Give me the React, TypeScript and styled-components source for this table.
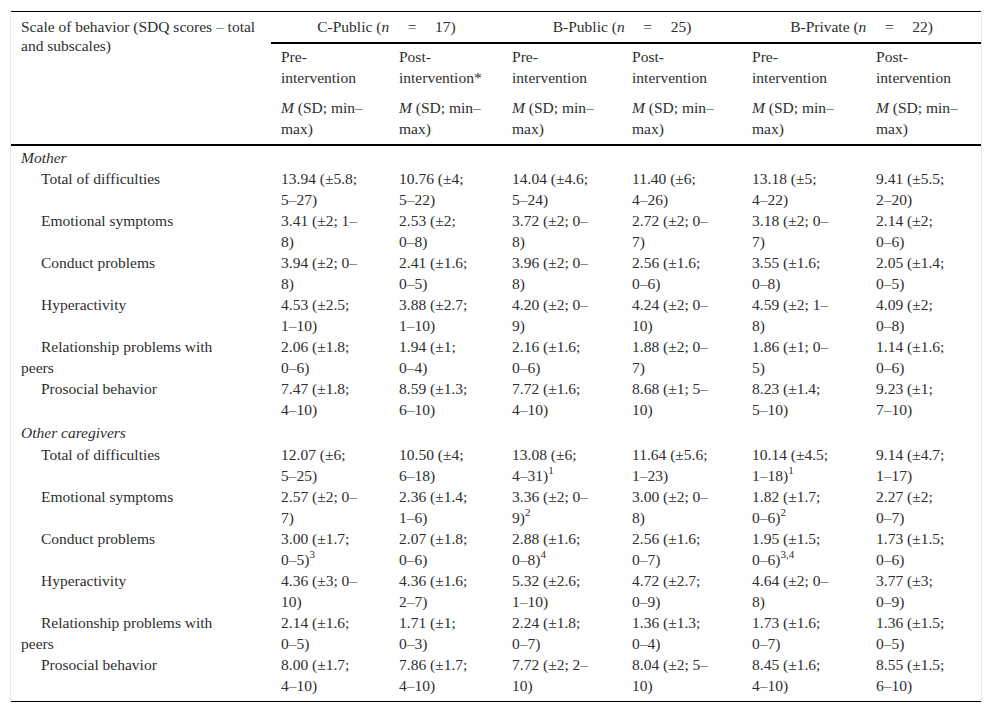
import React from "react";
import styled, { createGlobalStyle } from "styled-components";

const GlobalStyle = createGlobalStyle`
  html, body {
    margin: 0;
    padding: 0;
    background: #fff;
  }
  body {
    font-family: "Liberation Serif", "Times New Roman", serif;
    color: #2e2e2e;
  }
`;

type Section = {
  title: string;
  rows: { label: string; cells: string[] }[];
};

// cell format: "first line|second line^superscript"
const sections: Section[] = [
  {
    title: "Mother",
    rows: [
      {
        label: "Total of difficulties",
        cells: ["13.94 (±5.8;|5–27)", "10.76 (±4;|5–22)", "14.04 (±4.6;|5–24)", "11.40 (±6;|4–26)", "13.18 (±5;|4–22)", "9.41 (±5.5;|2–20)"],
      },
      {
        label: "Emotional symptoms",
        cells: ["3.41 (±2; 1–|8)", "2.53 (±2;|0–8)", "3.72 (±2; 0–|8)", "2.72 (±2; 0–|7)", "3.18 (±2; 0–|7)", "2.14 (±2;|0–6)"],
      },
      {
        label: "Conduct problems",
        cells: ["3.94 (±2; 0–|8)", "2.41 (±1.6;|0–5)", "3.96 (±2; 0–|8)", "2.56 (±1.6;|0–6)", "3.55 (±1.6;|0–8)", "2.05 (±1.4;|0–5)"],
      },
      {
        label: "Hyperactivity",
        cells: ["4.53 (±2.5;|1–10)", "3.88 (±2.7;|1–10)", "4.20 (±2; 0–|9)", "4.24 (±2; 0–|10)", "4.59 (±2; 1–|8)", "4.09 (±2;|0–8)"],
      },
      {
        label: "Relationship problems with|peers",
        cells: ["2.06 (±1.8;|0–6)", "1.94 (±1;|0–4)", "2.16 (±1.6;|0–6)", "1.88 (±2; 0–|7)", "1.86 (±1; 0–|5)", "1.14 (±1.6;|0–6)"],
      },
      {
        label: "Prosocial behavior",
        cells: ["7.47 (±1.8;|4–10)", "8.59 (±1.3;|6–10)", "7.72 (±1.6;|4–10)", "8.68 (±1; 5–|10)", "8.23 (±1.4;|5–10)", "9.23 (±1;|7–10)"],
      },
    ],
  },
  {
    title: "Other caregivers",
    rows: [
      {
        label: "Total of difficulties",
        cells: ["12.07 (±6;|5–25)", "10.50 (±4;|6–18)", "13.08 (±6;|4–31)^1", "11.64 (±5.6;|1–23)", "10.14 (±4.5;|1–18)^1", "9.14 (±4.7;|1–17)"],
      },
      {
        label: "Emotional symptoms",
        cells: ["2.57 (±2; 0–|7)", "2.36 (±1.4;|1–6)", "3.36 (±2; 0–|9)^2", "3.00 (±2; 0–|8)", "1.82 (±1.7;|0–6)^2", "2.27 (±2;|0–7)"],
      },
      {
        label: "Conduct problems",
        cells: ["3.00 (±1.7;|0–5)^3", "2.07 (±1.8;|0–6)", "2.88 (±1.6;|0–8)^4", "2.56 (±1.6;|0–7)", "1.95 (±1.5;|0–6)^3,4", "1.73 (±1.5;|0–6)"],
      },
      {
        label: "Hyperactivity",
        cells: ["4.36 (±3; 0–|10)", "4.36 (±1.6;|2–7)", "5.32 (±2.6;|1–10)", "4.72 (±2.7;|0–9)", "4.64 (±2; 0–|8)", "3.77 (±3;|0–9)"],
      },
      {
        label: "Relationship problems with|peers",
        cells: ["2.14 (±1.6;|0–5)", "1.71 (±1;|0–3)", "2.24 (±1.8;|0–7)", "1.36 (±1.3;|0–4)", "1.73 (±1.6;|0–7)", "1.36 (±1.5;|0–5)"],
      },
      {
        label: "Prosocial behavior",
        cells: ["8.00 (±1.7;|4–10)", "7.86 (±1.7;|4–10)", "7.72 (±2; 2–|10)", "8.04 (±2; 5–|10)", "8.45 (±1.6;|4–10)", "8.55 (±1.5;|6–10)"],
      },
    ],
  },
];

const groups = [
  { name: "C-Public", n: 17 },
  { name: "B-Public", n: 25 },
  { name: "B-Private", n: 22 },
];

const colWidths = [260, 118, 113, 120, 120, 124, 115];

function Lines({ text }: { text: string }) {
  const [body, sup] = text.split("^");
  const [first, second] = body.split("|");
  return (
    <>
      {first}
      {second !== undefined && <br />}
      {second}
      {sup && <sup>{sup}</sup>}
    </>
  );
}

export default function App() {
  return (
    <>
      <GlobalStyle />
      <Frame>
        <Table>
          <colgroup>
            {colWidths.map((w, i) => (
              <col key={i} style={{ width: w }} />
            ))}
          </colgroup>
          <thead>
            <tr>
              <ScaleHead rowSpan={2}>
                Scale of behavior (SDQ scores – total
                <br />
                and subscales)
              </ScaleHead>
              {groups.map((g) => (
                <GroupHead key={g.name} colSpan={2}>
                  {g.name} (<i>n</i>
                  {"\u2003\u2009=\u2003\u2009"}
                  {g.n})
                </GroupHead>
              ))}
            </tr>
            <tr>
              {groups.map((g, gi) =>
                ["Pre-", "Post-"].map((p, pi) => (
                  <SubHead key={`${g.name}-${p}`}>
                    <HeadBlock>
                      {p}
                      <br />
                      intervention{gi === 0 && pi === 1 ? "*" : ""}
                    </HeadBlock>
                    <HeadBlock>
                      <i>M</i> (SD; min–
                      <br />
                      max)
                    </HeadBlock>
                  </SubHead>
                ))
              )}
            </tr>
          </thead>
          {sections.map((s, si) => (
            <tbody key={s.title}>
              <tr>
                <SectionCell colSpan={7} $first={si === 0}>
                  <i>{s.title}</i>
                </SectionCell>
              </tr>
              {s.rows.map((r, ri) => {
                const last = si === sections.length - 1 && ri === s.rows.length - 1;
                return (
                  <tr key={r.label}>
                    <LabelCell $last={last}>
                      <Lines text={r.label} />
                    </LabelCell>
                    {r.cells.map((c, ci) => (
                      <DataCell key={ci} $last={last}>
                        <Lines text={c} />
                      </DataCell>
                    ))}
                  </tr>
                );
              })}
            </tbody>
          ))}
        </Table>
      </Frame>
    </>
  );
}

const Frame = styled.div`
  margin: 11px 0 0 10px;
  width: 970px;
  border-left: 1px solid #e6e6e6;
  border-right: 1px solid #e6e6e6;
`;

const Table = styled.table`
  width: 970px;
  table-layout: fixed;
  border-collapse: collapse;
  font-family: "Liberation Serif", "Times New Roman", serif;
  font-size: 15.5px;
  line-height: 21px;
  color: #2e2e2e;
  border-top: 1px solid #000;
  border-bottom: 1.5px solid #000;

  & th,
  & td {
    text-align: left;
    vertical-align: top;
    font-weight: normal;
    white-space: nowrap;
    padding: 0 10px;
  }

  & sup {
    font-size: 11px;
    line-height: 0;
    vertical-align: 7px;
  }
`;

const ScaleHead = styled.th`
  && {
    padding-top: 5px;
    line-height: 19px;
    border-bottom: 2px solid #000;
  }
`;

const GroupHead = styled.th`
  && {
    text-align: center;
    padding-top: 4px;
    padding-bottom: 5px;
    border-bottom: 2px solid #000;
  }
`;

const SubHead = styled.th`
  && {
    padding-top: 2px;
    padding-bottom: 5px;
    border-bottom: 2px solid #000;
  }
`;

const HeadBlock = styled.div`
  & + & {
    margin-top: 9px;
  }
`;

const SectionCell = styled.td<{ $first: boolean }>`
  && {
    padding-top: ${(p) => (p.$first ? "1px" : "2px")};
    padding-bottom: ${(p) => (p.$first ? "0" : "1px")};
  }
`;

const LabelCell = styled.td<{ $last: boolean }>`
  && {
    text-indent: 20px;
    padding-bottom: ${(p) => (p.$last ? "5px" : "0")};
  }
`;

const DataCell = styled.td<{ $last: boolean }>`
  && {
    padding-bottom: ${(p) => (p.$last ? "5px" : "0")};
  }
`;
